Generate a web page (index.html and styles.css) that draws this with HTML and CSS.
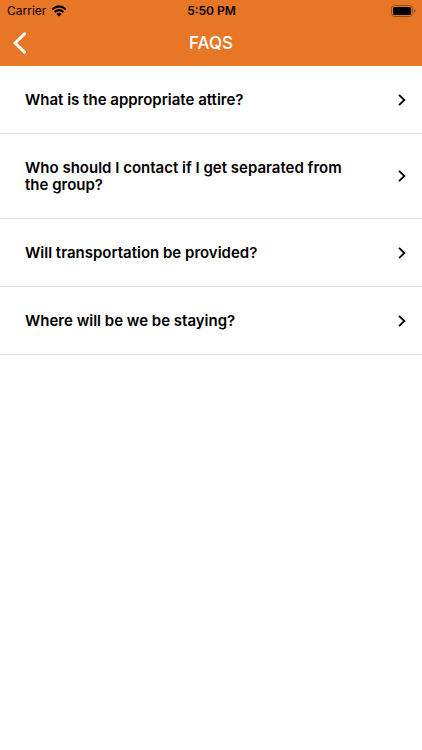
FILE: index.html
```
<!DOCTYPE html>
<html lang="en">
<head>
<meta charset="utf-8">
<meta name="viewport" content="width=device-width, initial-scale=1">
<title>FAQS</title>
<link rel="stylesheet" href="styles.css">
</head>
<body>
<header class="header">
  <div class="status">
    <div class="carrier">
      <span>Carrier</span>
      <svg class="wifi" viewBox="0 0 16 12" aria-hidden="true">
        <path d="M1.2 4.4Q8-1.6 14.8 4.4M3.6 7Q8 3.2 12.4 7"/>
        <path class="solid" d="M5.3 8.8Q8 6.8 10.7 8.8L8 11.6Z"/>
      </svg>
    </div>
    <span class="time">5:50 PM</span>
    <svg class="battery" viewBox="0 0 25 12" aria-hidden="true">
      <rect class="shell" x="0.5" y="0.5" width="21" height="11" rx="3"/>
      <rect x="2" y="2" width="18" height="8" rx="1.5"/>
      <path class="cap" d="M23 4Q24.5 4.4 24.5 6T23 8Z"/>
    </svg>
  </div>
  <nav class="bar">
    <button class="back" type="button" aria-label="Back">
      <svg viewBox="0 0 14 22" aria-hidden="true"><path d="M11.5 1.8L2 11L11.5 20.2"/></svg>
    </button>
    <h1 class="title">FAQS</h1>
  </nav>
</header>
<main>
  <ul class="list">
    <li><a class="row" href="#attire"><span class="question">What is the appropriate attire?</span><svg class="chevron" viewBox="0 0 8 14" aria-hidden="true"><path d="M1 1.8L6.4 7L1 12.2"/></svg></a></li>
    <li><a class="row" href="#contact"><span class="question">Who should I contact if I get separated from the group?</span><svg class="chevron" viewBox="0 0 8 14" aria-hidden="true"><path d="M1 1.8L6.4 7L1 12.2"/></svg></a></li>
    <li><a class="row" href="#transportation"><span class="question">Will transportation be provided?</span><svg class="chevron" viewBox="0 0 8 14" aria-hidden="true"><path d="M1 1.8L6.4 7L1 12.2"/></svg></a></li>
    <li><a class="row" href="#staying"><span class="question">Where will be we be staying?</span><svg class="chevron" viewBox="0 0 8 14" aria-hidden="true"><path d="M1 1.8L6.4 7L1 12.2"/></svg></a></li>
  </ul>
</main>
</body>
</html>
```
FILE: styles.css
```
* {
  box-sizing: border-box;
}

body {
  margin: 0;
  background: #fff;
  color: #000;
  font-family: Inter, "Liberation Sans", sans-serif;
}

.header {
  padding-bottom: 2px;
  background: #e87627;
}

.status {
  display: grid;
  grid-template-columns: 1fr auto 1fr;
  align-items: center;
  height: 22px;
  padding: 0 6px 0 7px;
  font-size: 12px;
  line-height: 22px;
}

.carrier {
  display: flex;
  align-items: center;
  gap: 5px;
}

.time {
  font-weight: 600;
}

.wifi {
  width: 16px;
  height: 12px;
  fill: none;
  stroke: #000;
  stroke-width: 2;
}

.wifi .solid {
  fill: #000;
  stroke: none;
}

.battery {
  justify-self: end;
  width: 25px;
  height: 12px;
}

.shell {
  fill: none;
  stroke: #8f4a1a;
}

.cap {
  fill: #8f4a1a;
}

.bar {
  display: grid;
  grid-template-columns: 44px 1fr 44px;
  align-items: center;
  height: 42px;
}

.back {
  display: flex;
  align-items: center;
  height: 42px;
  padding: 0 0 0 13px;
  border: 0;
  background: none;
}

.back svg {
  width: 14px;
  height: 22px;
  fill: none;
  stroke: #fff;
  stroke-width: 3;
  stroke-linecap: round;
  stroke-linejoin: round;
}

.title {
  margin: 0;
  color: #fff;
  font-size: 17px;
  font-weight: 500;
  line-height: 20px;
  text-align: center;
}

.list {
  margin: 0;
  padding: 0;
  list-style: none;
}

.row {
  display: flex;
  align-items: center;
  justify-content: space-between;
  gap: 48px;
  padding: 25px 16px 25px 25px;
  border-bottom: 1px solid #dedede;
  color: inherit;
  text-decoration: none;
}

.question {
  font-size: 15px;
  font-weight: 600;
  line-height: 17px;
}

.chevron {
  flex: none;
  width: 8px;
  height: 14px;
  fill: none;
  stroke: #000;
  stroke-width: 1.8;
}
```
